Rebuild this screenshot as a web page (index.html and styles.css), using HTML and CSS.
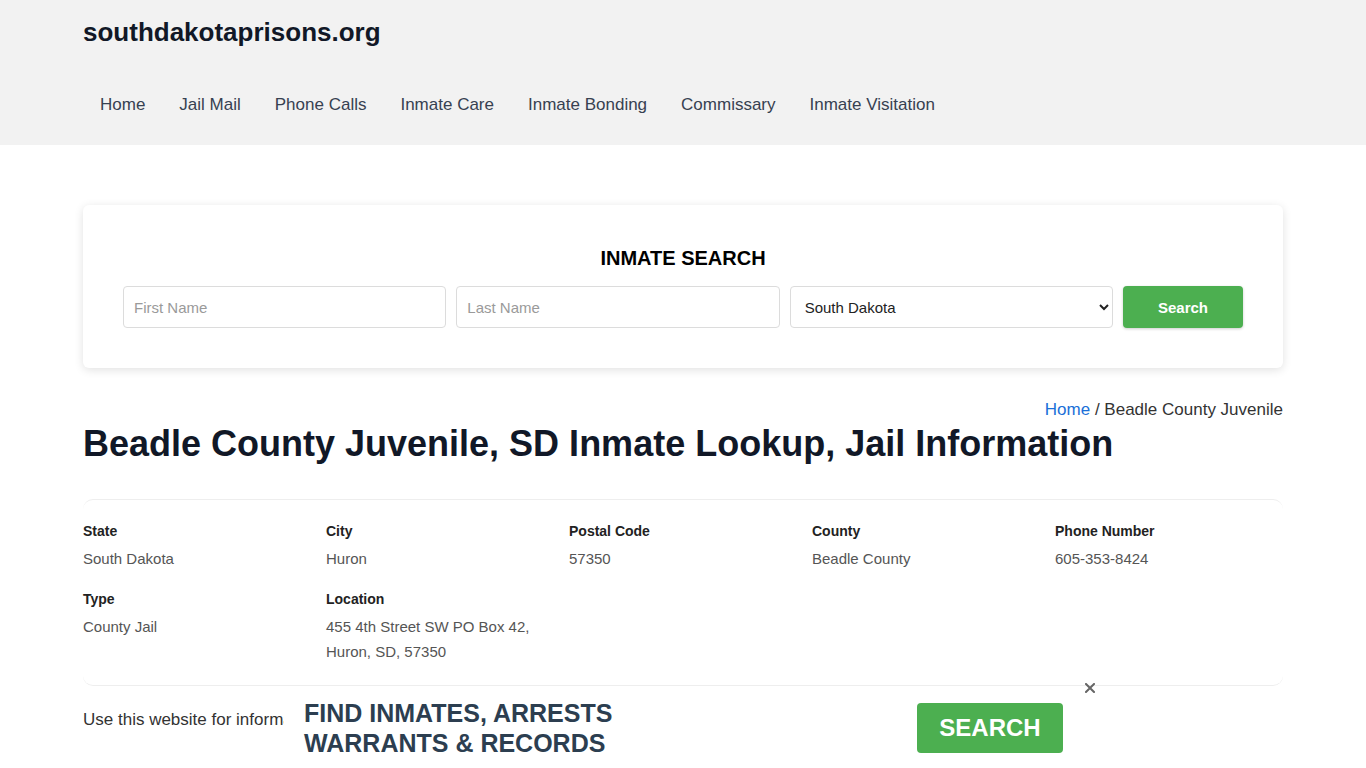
FILE: index.html
```html
<!DOCTYPE html>
<html lang="en">
<head>
<meta charset="utf-8">
<title>Beadle County Juvenile, SD Inmate Lookup, Jail Information</title>
<link rel="stylesheet" href="styles.css">
</head>
<body>
<header class="site-header">
  <div class="container">
    <div class="logo">southdakotaprisons.org</div>
    <nav class="nav">
      <a href="#">Home</a>
      <a href="#">Jail Mail</a>
      <a href="#">Phone Calls</a>
      <a href="#">Inmate Care</a>
      <a href="#">Inmate Bonding</a>
      <a href="#">Commissary</a>
      <a href="#">Inmate Visitation</a>
    </nav>
  </div>
</header>

<main class="container main">
  <section class="search-card">
    <h2 class="search-title">INMATE SEARCH</h2>
    <form class="search-form">
      <input class="field" type="text" placeholder="First Name">
      <input class="field" type="text" placeholder="Last Name">
      <select class="field select">
        <option>South Dakota</option>
      </select>
      <button class="btn" type="button">Search</button>
    </form>
  </section>

  <div class="breadcrumb"><a href="#">Home</a> / Beadle County Juvenile</div>
  <h1 class="title">Beadle County Juvenile, SD Inmate Lookup, Jail Information</h1>

  <section class="info">
    <div class="info-grid">
      <div class="item"><div class="label">State</div><div class="value">South Dakota</div></div>
      <div class="item"><div class="label">City</div><div class="value">Huron</div></div>
      <div class="item"><div class="label">Postal Code</div><div class="value">57350</div></div>
      <div class="item"><div class="label">County</div><div class="value">Beadle County</div></div>
      <div class="item"><div class="label">Phone Number</div><div class="value">605-353-8424</div></div>
      <div class="item"><div class="label">Type</div><div class="value">County Jail</div></div>
      <div class="item"><div class="label">Location</div><div class="value">455 4th Street SW PO Box 42,<br>Huron, SD, 57350</div></div>
    </div>
  </section>

  <p class="note">Use this website for informational purposes only; it is not affiliated with any government agency.</p>
  <p class="note note-next">Beadle County Juvenile is located in Huron, South Dakota. Contact the facility directly to confirm inmate status, visitation hours and mailing rules.</p>
</main>

<div class="promo">
  <div class="promo-inner">
    <div class="promo-text">FIND INMATES, ARRESTS<br>WARRANTS &amp; RECORDS</div>
    <a class="promo-btn" href="#">SEARCH</a>
    <span class="promo-close" aria-label="close">
      <svg width="10" height="10" viewBox="0 0 10 10"><path d="M1 1L9 9M9 1L1 9" stroke="#666" stroke-width="2" stroke-linecap="square"/></svg>
    </span>
  </div>
</div>
</body>
</html>
```

FILE: styles.css
```css
* { box-sizing: border-box; }
body {
  margin: 0;
  background: #fff;
  font-family: "Liberation Sans", Arial, sans-serif;
  color: #333;
}
a { text-decoration: none; }
.container {
  width: 1200px;
  margin: 0 auto;
}
.site-header {
  background: #f2f2f2;
  padding: 16px 0 28px;
}
.logo {
  font-size: 26px;
  font-weight: 700;
  line-height: 32px;
  color: #111827;
}
.nav {
  display: flex;
  margin-top: 45px;
}
.nav a {
  font-size: 17px;
  line-height: 24px;
  padding: 0 17px;
  color: #374151;
}
.main {
  padding-top: 60px;
  padding-bottom: 120px;
}
.search-card {
  background: #fff;
  border-radius: 6px;
  box-shadow: 0 2px 10px rgba(0,0,0,0.12);
  padding: 41px 40px 40px;
}
.search-title {
  margin: 0;
  text-align: center;
  font-size: 20px;
  line-height: 24px;
  font-weight: 700;
  color: #000;
}
.search-form {
  display: flex;
  gap: 10px;
  margin-top: 16px;
}
.field {
  flex: 1;
  height: 42px;
  border: 1px solid #dcdcdc;
  border-radius: 4px;
  padding: 0 10px;
  font-family: "Liberation Sans", Arial, sans-serif;
  font-size: 15px;
  color: #222;
  background: #fff;
  min-width: 0;
}
.field::placeholder { color: #9a9a9a; }
.select { padding-left: 10px; }
.btn {
  width: 120px;
  height: 42px;
  border: none;
  border-radius: 4px;
  background: #4caf50;
  color: #fff;
  font-family: "Liberation Sans", Arial, sans-serif;
  font-size: 15px;
  font-weight: 700;
  box-shadow: 0 1px 3px rgba(0,0,0,0.2);
}
.breadcrumb {
  margin-top: 30px;
  text-align: right;
  font-size: 17px;
  line-height: 24px;
  color: #333;
}
.breadcrumb a { color: #1a6fd8; }
.title {
  margin: 0;
  font-size: 36px;
  line-height: 43px;
  font-weight: 700;
  color: #111827;
}
.info {
  margin-top: 34px;
  border-top: 1px solid #eeeeee;
  border-bottom: 1px solid #eeeeee;
  border-radius: 10px;
  padding: 21px 0 21px;
}
.info-grid {
  display: grid;
  grid-template-columns: repeat(5, 240px);
  column-gap: 3px;
  row-gap: 18px;
}
.label {
  font-size: 14px;
  line-height: 20px;
  font-weight: 700;
  color: #222;
  margin-bottom: 5px;
}
.value {
  font-size: 15px;
  line-height: 25px;
  color: #555;
}
.note {
  margin: 22px 0 0;
  font-size: 17px;
  line-height: 24px;
  color: #333;
}
.note-next {
  margin-top: 80px;
}
.promo {
  position: fixed;
  left: 284px;
  right: 0;
  bottom: 0;
  height: 80px;
  background: #fff;
}
.promo-inner {
  position: relative;
  width: 800px;
  height: 100%;
  display: flex;
  align-items: center;
  justify-content: space-between;
  padding: 0 21px 0 20px;
}
.promo-text {
  font-size: 25px;
  line-height: 30px;
  font-weight: 700;
  color: #2c3e50;
}
.promo-btn {
  display: flex;
  align-items: center;
  justify-content: center;
  width: 146px;
  height: 50px;
  border-radius: 4px;
  background: #4caf50;
  color: #fff;
  font-size: 24px;
  font-weight: 700;
}
.promo-close {
  position: absolute;
  right: -11px;
  top: -5px;
  width: 10px;
  height: 10px;
  display: block;
  line-height: 0;
}
```
